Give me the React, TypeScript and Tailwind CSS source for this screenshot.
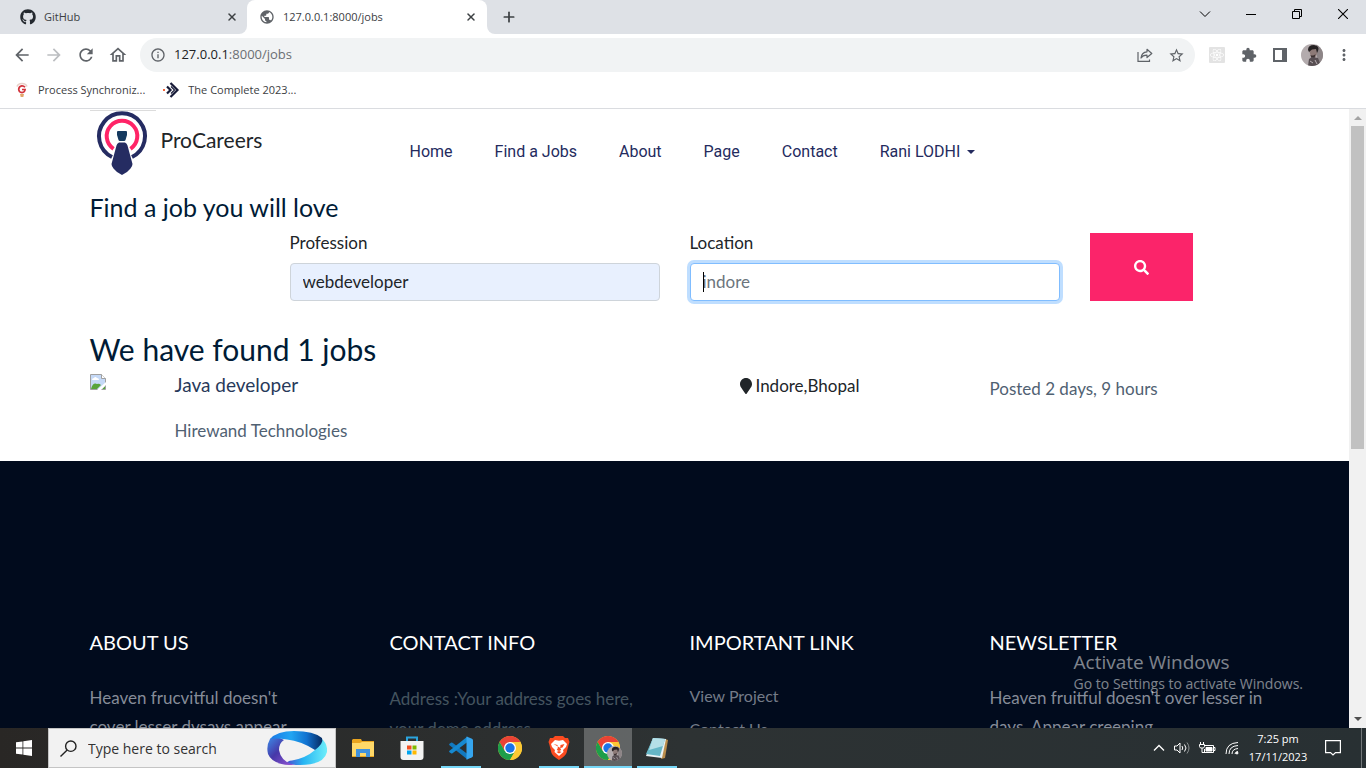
import type { ReactNode } from "react";
import { FaGithub, FaMapMarker, FaReact, FaSearch } from "react-icons/fa";
import {
  MdArrowBack,
  MdArrowForward,
  MdExtension,
  MdInfoOutline,
  MdMoreVert,
  MdOutlineHome,
  MdPublic,
  MdRefresh,
  MdStarBorder,
} from "react-icons/md";
import { Plus, X } from "lucide-react";

function TabTitle({ icon, title }: { icon: ReactNode; title: string }) {
  return (
    <>
      {icon}
      <span className="flex-1 truncate text-[11px] leading-4 text-[#3c4043]">{title}</span>
      <button type="button" aria-label={`Close ${title}`} className="text-[#3c4043]">
        <X size={12} strokeWidth={3} />
      </button>
    </>
  );
}

function TabStrip() {
  return (
    <div className="flex h-[34px] shrink-0 bg-white">
      <div className="flex w-[247px] items-center gap-2 rounded-br-lg bg-[#dee1e6] pr-[9px] pl-5">
        <TabTitle icon={<FaGithub size={16} className="text-[#24292f]" />} title="GitHub" />
      </div>
      <div className="w-[240px] bg-[#dee1e6]">
        <div className="flex h-full items-center gap-2 rounded-t-lg bg-white pr-[10px] pl-3">
          <TabTitle icon={<MdPublic size={16} className="text-[#5f6368]" />} title="127.0.0.1:8000/jobs" />
        </div>
      </div>
      <div className="flex flex-1 items-center rounded-bl-lg bg-[#dee1e6] pl-[14px]">
        <button type="button" aria-label="New tab" className="text-[#3c4043]">
          <Plus size={16} strokeWidth={2.6} />
        </button>
        <div className="ml-auto flex h-full items-start text-black">
          <button type="button" aria-label="Search tabs" className="flex h-7 w-[46px] items-center justify-center">
            <svg width="12" height="12" viewBox="0 0 12 12" fill="none" stroke="currentColor">
              <path d="M1 3.5 6 8.5 11 3.5" />
            </svg>
          </button>
          <button type="button" aria-label="Minimize" className="flex h-7 w-[46px] items-center justify-center">
            <svg width="10" height="10" viewBox="0 0 10 10" fill="currentColor">
              <path d="M0 5h10v1H0z" />
            </svg>
          </button>
          <button type="button" aria-label="Restore" className="flex h-7 w-[46px] items-center justify-center">
            <svg width="10" height="10" viewBox="0 0 10 10" fill="none" stroke="currentColor">
              <path d="M.5 2.5h7v7h-7zM2.5 2.5v-2h7v7h-2" />
            </svg>
          </button>
          <button type="button" aria-label="Close" className="flex h-7 w-[46px] items-center justify-center">
            <svg width="10" height="10" viewBox="0 0 10 10" fill="none" stroke="currentColor" strokeWidth="1.1">
              <path d="M0 0l10 10M10 0 0 10" />
            </svg>
          </button>
        </div>
      </div>
    </div>
  );
}

function Avatar({ size }: { size: number }) {
  return (
    <svg width={size} height={size} viewBox="0 0 22 22">
      <clipPath id={`face-${size}`}>
        <circle cx="11" cy="11" r="11" />
      </clipPath>
      <g clipPath={`url(#face-${size})`}>
        <path d="M0 0h22v22H0z" fill="#b3abad" />
        <path d="M15 0h7v22h-5z" fill="#8d8587" />
        <path d="M8 6q1-4 5-4 5 1 3 8l-2 4-4-1z" fill="#8d7a77" />
        <path d="M7 6q0-5 6-5 6 1 4 6l-1 2-1-4-4 .5L8 8z" fill="#262223" />
        <path d="M9.500 11q3 1.500 5-1l-1 4-3 0z" fill="#3b3030" />
        <path d="M7 22l1-7 3-2 6 1 3 8z" fill="#574e52" />
        <path d="M9 17l3 2M14 16l2 4" stroke="#b8aeb2" />
      </g>
    </svg>
  );
}

function Toolbar() {
  return (
    <div className="flex h-[42px] shrink-0 items-center bg-white pr-[13px] pl-3 text-[#5f6368]">
      <div className="flex gap-3">
        <button type="button" aria-label="Back"><MdArrowBack size={20} /></button>
        <button type="button" aria-label="Forward" className="text-[#bcbec1]"><MdArrowForward size={20} /></button>
        <button type="button" aria-label="Reload"><MdRefresh size={20} /></button>
        <button type="button" aria-label="Home page"><MdOutlineHome size={20} /></button>
      </div>
      <div className="ml-3 flex h-[34px] flex-1 items-center rounded-full bg-[#f1f3f4] px-[10px]">
        <MdInfoOutline size={16} />
        <span className="ml-2 flex-1 text-[13px] text-[#6b6f73]">
          <span className="text-[#202124]">127.0.0.1</span>:8000/jobs
        </span>
        <button type="button" aria-label="Share this page">
          <svg width="16" height="16" viewBox="0 0 16 16" fill="none" stroke="currentColor" strokeWidth="1.2">
            <path d="M1 5v9.4h11.5v-2" />
            <path d="M10 2.3 14.8 6.5 10 10.5V8.2C7 8.1 5.2 9 4 11c.3-3.500 2.500-5.900 6-6.200z" strokeLinejoin="round" />
          </svg>
        </button>
        <button type="button" aria-label="Bookmark this tab" className="ml-[15px]"><MdStarBorder size={17} /></button>
      </div>
      <div className="ml-[14px] flex items-center gap-4">
        <button type="button" aria-label="React extension" className="flex h-4 w-4 items-center justify-center rounded-[1px] bg-[#e3e3e3] text-white">
          <FaReact size={14} />
        </button>
        <button type="button" aria-label="Extensions"><MdExtension size={16} /></button>
        <button type="button" aria-label="Side panel">
          <svg width="14" height="14" viewBox="0 0 14 14" fill="currentColor">
            <path fillRule="evenodd" d="M0 0h14v14H0zM2 2v10h7V2z" />
          </svg>
        </button>
        <button type="button" aria-label="Profile" className="-ml-[2px]"><Avatar size={22} /></button>
        <button type="button" aria-label="Menu" className="-ml-1"><MdMoreVert size={18} /></button>
      </div>
    </div>
  );
}

function Bookmarks() {
  return (
    <div className="flex h-[33px] shrink-0 items-start gap-[18px] border-b border-[#dadce0] bg-white pt-[6px] pl-[14px] text-[11px] leading-4 text-[#3c4043]">
      <a href="#process" className="flex gap-2">
        <svg width="16" height="16" viewBox="0 0 16 16" fill="none">
          <path d="M3 4.500Q4 1.500 8 1.500t5 3" stroke="#e6cfc8" strokeWidth="1.500" />
          <path d="M11 5.300Q9.700 3.700 7.700 3.900 5 4.300 4.700 7.200 4.900 10.400 8 10.600q2.800-.2 3.100-3.100H8" stroke="#d2333b" strokeWidth="1.700" />
          <path d="M6 12h4l-.7 3H6.700z" fill="#e2a66b" />
        </svg>
        <span>Process Synchroniz...</span>
      </a>
      <a href="#complete" className="flex gap-2">
        <svg width="17" height="16" viewBox="0 0 17 16" fill="none">
          <path d="M4 4.500 7.500 8 4 11.500" stroke="#171b38" strokeWidth="2.200" />
          <path d="M7.500 1 14.500 8l-7 7" stroke="#171b38" strokeWidth="2.200" />
          <path d="M8 4.500 11.500 8 8 11.500" stroke="#171b38" strokeWidth="1.200" />
          <path d="M0 7h2v2H0z" fill="#f0643c" />
        </svg>
        <span>The Complete 2023...</span>
      </a>
    </div>
  );
}

function Logo() {
  return (
    <svg width="66" height="67" viewBox="0 0 66 67" fill="none">
      <path d="M0 .5h66" stroke="#dcdcdc" />
      <path d="M22 47A23 23 0 1 1 42 47" stroke="#252c62" strokeWidth="4" />
      <path d="M23.500 38.800A15.300 15.300 0 1 1 40.500 38.800" stroke="#ff2467" strokeWidth="4" />
      <path d="M28 21h8q1 0 1 1v3l-1.500 5q-.2 1-1.500 1h-4q-1.300 0-1.500-1L27 25v-3q0-1 1-1z" fill="#15395f" />
      <path d="M29 32.500h6q2 1 2.500 3L42.500 54q0 2-2 4.500Q37 63 32 65q-5-2-8.500-6.500-2-2.500-2-4.500l5-18.500q.5-2 2.500-3z" fill="#252c62" />
    </svg>
  );
}

const navLinks = ["Home", "Find a Jobs", "About", "Page", "Contact"];

function SiteHeader() {
  return (
    <header className="flex pt-px">
      <a href="#home" className="flex w-[299px] shrink-0 gap-[5px]">
        <Logo />
        <span className="pt-[15px] text-[21px] leading-[30px] text-[#212529]">ProCareers</span>
      </a>
      <nav className="flex items-start pt-[30px] font-['Roboto',sans-serif] text-[16px] leading-6 text-[#242b5e]">
        {navLinks.map((label) => (
          <a key={label} href="#nav" className="px-[21px]">{label}</a>
        ))}
        <button type="button" className="flex items-center gap-[7px] px-[21px]">
          Rani LODHI
          <svg width="8" height="4" viewBox="0 0 8 4" fill="currentColor"><path d="M0 0h8L4 4z" /></svg>
        </button>
      </nav>
    </header>
  );
}

function SearchForm() {
  return (
    <form className="grid grid-cols-12 gap-x-[30px] pt-[9px] text-[17px] text-[#212529]" onSubmit={(e) => e.preventDefault()}>
      <div className="col-span-4 col-start-3">
        <label htmlFor="profession" className="mb-2 block leading-6">Profession</label>
        <input id="profession" defaultValue="webdeveloper" className="h-[38px] w-full rounded border border-[#ced4da] bg-[#e8f0fe] px-3 pb-[2px] outline-none" />
      </div>
      <div className="col-span-4">
        <label htmlFor="location" className="mb-2 block leading-6">Location</label>
        <div className="relative">
          <input id="location" placeholder="indore" className="h-[38px] w-full rounded border border-[#80bdff] bg-white px-3 pb-[2px] ring-3 ring-[#bfdeff] outline-none placeholder:text-[#6c757d]" />
          <span className="absolute top-[9px] left-[13px] h-5 w-px bg-black" />
        </div>
      </div>
      <div className="col-span-2 flex pt-[2px]">
        <button type="submit" aria-label="Search jobs" className="flex w-[103px] items-center justify-center bg-[#fb246a] text-white">
          <FaSearch size={15} />
        </button>
      </div>
    </form>
  );
}

function BrokenImage() {
  return (
    <svg width="16" height="16" viewBox="0 0 16 16" role="img" aria-label="Company logo">
      <path d="M.5.5h11l4 4v11H.5z" fill="#c5d9f7" stroke="#a0a0a0" />
      <path d="M2 6q0-2 2-2 1-2 3 0 2 0 2 2z" fill="#fff" />
      <path d="M1 15q2-7 6-5 2-1 4 1l-4 4z" fill="#58a43b" />
      <path d="M12 15l3-3v3z" fill="#58a43b" />
      <path d="M7 16 16 8v3l-5 5z" fill="#fff" />
      <path d="M11.500.5v4h4" fill="#fff" stroke="#a0a0a0" />
    </svg>
  );
}

function JobResults() {
  return (
    <section className="pt-[31px] pb-[18px]">
      <h1 className="text-[30px] leading-[34px] text-[#001b36]">We have found 1 jobs</h1>
      <article className="mt-2 grid grid-cols-[85px_1fr_250px_270px] text-[17px] leading-6 text-[#506172]">
        <BrokenImage />
        <div>
          <h2 className="text-[19px] leading-[21px] text-[#28395a]">Java developer</h2>
          <p className="mt-6">Hirewand Technologies</p>
        </div>
        <p className="flex items-start gap-1 text-[#212529]">
          <FaMapMarker size={16} className="mt-1 -mr-[2px] -ml-[2px]" />
          Indore,Bhopal
        </p>
        <p className="pt-[3px]">Posted 2 days, 9 hours</p>
      </article>
    </section>
  );
}

function FooterColumn({ title, children }: { title: string; children: ReactNode }) {
  return (
    <div>
      <h3 className="mb-[29px] text-[20px] leading-6 text-white">{title}</h3>
      {children}
    </div>
  );
}

function SiteFooter() {
  return (
    <footer className="flex-1 bg-[#010b1d] pt-[169px] text-[17px] text-[#868c98]">
      <div className="mx-auto grid max-w-[1200px] grid-cols-4 gap-[30px] px-[15px] whitespace-nowrap">
        <FooterColumn title="ABOUT US">
          <p className="leading-[29px]">Heaven frucvitful doesn't<br />cover lesser dvsays appear</p>
        </FooterColumn>
        <FooterColumn title="CONTACT INFO">
          <p className="pt-px leading-[30px] text-[#44545f]">Address :Your address goes here,<br />your demo address.</p>
        </FooterColumn>
        <FooterColumn title="IMPORTANT LINK">
          <ul className="-mt-1 text-[16px] leading-[33px] text-[#747b88]">
            <li><a href="#view">View Project</a></li>
            <li><a href="#contact">Contact Us</a></li>
          </ul>
        </FooterColumn>
        <FooterColumn title="NEWSLETTER">
          <p className="leading-[29px]">Heaven fruitful doesn't over lesser in<br />days. Appear creeping</p>
        </FooterColumn>
      </div>
    </footer>
  );
}

function Scrollbar() {
  return (
    <div aria-hidden="true" className="flex w-[17px] shrink-0 flex-col items-center bg-[#f1f1f1] py-[6px]">
      <svg width="8" height="5" viewBox="0 0 8 5" fill="#a3a3a3"><path d="M0 5h8L4 1z" /></svg>
      <div className="mt-[6px] h-[323px] w-[13px] shrink-0 bg-[#c1c1c1]" />
      <svg width="8" height="5" viewBox="0 0 8 5" fill="#505050" className="mt-auto"><path d="M0 0h8L4 4z" /></svg>
    </div>
  );
}

function TaskButton({ label, open, active, children }: { label: string; open?: boolean; active?: boolean; children: ReactNode }) {
  return (
    <button
      type="button"
      aria-label={label}
      className={`flex w-12 flex-col items-center ${active ? "bg-white/25" : ""}`}
    >
      <span className="flex flex-1 items-center pt-[2px]">{children}</span>
      <span className={`h-[2px] ${active ? "w-12" : "w-10"} ${open ? "bg-[#76d7f7]" : ""}`} />
    </button>
  );
}

function ChromeMark() {
  return (
    <svg width="24" height="24" viewBox="0 0 24 24">
      <circle cx="12" cy="12" r="12" fill="#fcc934" />
      <path d="M1.600 6A12 12 0 0 1 22.400 6H12L6.800 15z" fill="#ea4335" />
      <path d="M1.600 6A12 12 0 0 0 12 24l5.200-9-10.400 0z" fill="#1e9e4a" />
      <path d="M12 6h10.400A12 12 0 0 1 12 24l5.200-9z" fill="#fcc934" />
      <circle cx="12" cy="12" r="6" fill="#fff" />
      <circle cx="12" cy="12" r="4.700" fill="#1a73e8" />
    </svg>
  );
}

function SearchArt() {
  return (
    <svg width="60" height="34" viewBox="0 0 60 34">
      <defs>
        <linearGradient id="ribbonTop" x1="0" x2="1">
          <stop offset="0" stopColor="#1b78e6" />
          <stop offset=".4" stopColor="#22a5f2" />
          <stop offset=".7" stopColor="#1272d0" />
          <stop offset="1" stopColor="#062a60" />
        </linearGradient>
        <linearGradient id="ribbonLeft" x1="0" x2="1" y2="1">
          <stop offset="0" stopColor="#3d8ce8" />
          <stop offset=".45" stopColor="#4638a8" />
          <stop offset="1" stopColor="#9a58d8" />
        </linearGradient>
        <linearGradient id="ribbonRight" x1="0" x2="1">
          <stop offset="0" stopColor="#4a4fd0" />
          <stop offset=".4" stopColor="#26b4f2" />
          <stop offset="1" stopColor="#6eeefa" />
        </linearGradient>
      </defs>
      <path d="M54 7Q61 13 60 21 57 34 33 34q-9 0-13-2 0-2 5-2.500Q39 27 48 19z" fill="url(#ribbonRight)" />
      <path d="M3 8Q-1 15 1 23q4 10 21 11h6q-14-3-16-15 0-7 5-10Q9 4 3 8z" fill="url(#ribbonLeft)" />
      <path d="M3 8Q10 0 27 0q20 0 28 7 2 5-7 12Q34 10 20 8.500 10 7 3 8z" fill="url(#ribbonTop)" />
    </svg>
  );
}

function Taskbar() {
  return (
    <div className="flex h-10 shrink-0 bg-linear-to-r from-[#292725] via-[#2d3233] to-[#283033] font-['Open_Sans',sans-serif]">
      <button type="button" aria-label="Start" className="flex w-12 items-center justify-center">
        <svg width="16" height="16" viewBox="0 0 16 16" fill="#fff">
          <path d="M0 2.300 6.500 1.400v6.200H0zM7.300 1.300 16 0v7.600H7.300zM0 8.400h6.500v6.200L0 13.700zM7.300 8.400H16V16l-8.700-1.300z" />
        </svg>
      </button>
      <label className="flex w-[288px] items-center border border-[#c4c4c4] bg-[#f2f2f2] pr-2 pl-[11px]">
        <svg width="17" height="17" viewBox="0 0 17 17" fill="none" stroke="#222" strokeWidth="1.400">
          <circle cx="10.800" cy="6.200" r="5.200" />
          <path d="M7.200 10 .5 16.500" />
        </svg>
        <input aria-label="Type here to search" placeholder="Type here to search" className="ml-[11px] w-0 flex-1 text-[14px] outline-none placeholder:text-[#333]" />
        <SearchArt />
      </label>
      <div className="flex gap-px pl-[3px]">
        <TaskButton label="File Explorer">
          <svg width="22" height="20" viewBox="0 0 22 20">
            <path d="M0 2 1 1h8l1 2h12v16H0z" fill="#e9a41f" />
            <path d="M0 5h8l2-1h12v14H0z" fill="#ffd868" />
            <path d="M4 19v-8h14v8h-4v-4H8v4z" fill="#4192dc" />
          </svg>
        </TaskButton>
        <TaskButton label="Microsoft Store">
          <svg width="24" height="24" viewBox="0 0 24 24">
            <path d="M7 6V1.500h10V6" fill="none" stroke="#2ba4dd" strokeWidth="2" />
            <path d="M.5 5h23v16q0 3-3 3h-17q-3 0-3-3z" fill="#f3f3f3" />
            <path d="M7 9.500h4.500v4H7z" fill="#f25022" /><path d="M12.500 9.500h4v4h-4z" fill="#7fba00" />
            <path d="M7 14.500h4.500v4H7z" fill="#00a4ef" /><path d="M12.500 14.500h4v4h-4z" fill="#ffb900" />
          </svg>
        </TaskButton>
        <TaskButton label="Visual Studio Code" open>
          <svg width="24" height="24" viewBox="0 0 24 24">
            <path d="M.5 7.800 2 6.700q.8-.4 1.500.1L18.500 18v5.500L.5 9.200q-.8-.7 0-1.400z" fill="#1279bf" />
            <path d="M.5 16.200 2 17.300q.8.4 1.500-.1L18.500 6V.5L.5 14.800q-.8.7 0 1.400z" fill="#1689d0" />
            <path d="M17.500.5 23 2.700q1 .5 1 1.500v15.600q0 1-1 1.500l-5.500 2.500z" fill="#35a5ee" />
          </svg>
        </TaskButton>
        <TaskButton label="Chrome"><ChromeMark /></TaskButton>
        <TaskButton label="Brave" open>
          <svg width="22" height="24" viewBox="0 0 22 24">
            <path d="M5 2 7 0h8l2 2 3 0 1.500 4-.7 2-2.300 9q-1 3-7.500 7-6.500-4-7.500-7L1.200 8 .5 6 2 2z" fill="#fb4b20" />
            <path d="M7 4l4 .7L15 4l4 4-1 3-3 3 .5 2-4.500 4-4.500-4L7 14l-3-3-1-3z" fill="#fff" />
            <path d="M5.500 8l4 1 .3 3-1 2 2.200 1 2.200-1-1-2 .3-3 4-1-2 3.500-2 .5M7.500 11.500l2 .5M8.500 16 11 17.500 13.500 16 11 15z" fill="#fb4b20" />
          </svg>
        </TaskButton>
        <TaskButton label="Chrome profile" open active>
          <span className="relative block">
            <ChromeMark />
            <span className="absolute top-[10px] left-[11px]"><Avatar size={15} /></span>
          </span>
        </TaskButton>
        <TaskButton label="Notepad" open>
          <svg width="24" height="24" viewBox="0 0 24 24">
            <path d="M20 3 23 4 20 22l-4 1z" fill="#b98d4c" />
            <path d="M8 2 21 3 17 22 1 20z" fill="#e9f3f5" />
            <path d="M8 2 20 3 15 20 1 18z" fill="#65b6c6" />
            <path d="M8 2 20 3 18 10 4 14z" fill="#b5dfe7" />
          </svg>
        </TaskButton>
      </div>
      <div className="ml-auto flex items-center text-white">
        <svg width="12" height="8" viewBox="0 0 12 8" fill="none" stroke="currentColor" strokeWidth="1.300"><path d="M1 6.500 6 1.500l5 5" /></svg>
        <svg width="17" height="14" viewBox="0 0 17 14" fill="none" stroke="currentColor" className="ml-[9px]">
          <path d="M.5 5v4H3l3 3V2L3 5zM8 5q1.500 2 0 4M10.500 3.500q3 3.500 0 7" />
          <path d="M13 1.500q4 5.500 0 11" stroke="#8d9293" />
        </svg>
        <svg width="17" height="14" viewBox="0 0 17 14" fill="none" stroke="currentColor" className="ml-2">
          <path d="M5 4.500h9.500v7h-9V8M14.500 6.500h1.500v3h-1.500" />
          <path d="M7 6.500h6v3.500H7z" fill="currentColor" />
          <path d="M1.500 1v2M4.500 1v2M.5 3.500h5v2l-1 1.500h-3l-1-1.500zM3 7v4.500h3" />
        </svg>
        <svg width="15" height="14" viewBox="0 0 15 14" fill="none" stroke="currentColor" className="ml-[9px]">
          <path d="M1 13Q1 2 13 1.500M4 13Q4 5 13 4.500M7 13q0-5 6-5.500M10 13q0-2 3-2.500" />
          <circle cx="12" cy="12" r="1" fill="currentColor" />
        </svg>
        <div className="w-[76px] text-center text-[11px] leading-[18px]">
          <div>7:25 pm</div>
          <div>17/11/2023</div>
        </div>
        <svg width="16" height="16" viewBox="0 0 16 16" fill="none" stroke="currentColor" strokeWidth="1.200" className="ml-[9px]">
          <path d="M.6.6h14.800v12H10.500L8 15l-2.500-2.400H.6z" />
        </svg>
        <div className="mr-1 ml-5 h-10 w-px bg-[#727779]" />
      </div>
    </div>
  );
}

export default function App() {
  return (
    <div className="flex h-screen flex-col overflow-hidden bg-white font-['Open_Sans',sans-serif]">
      <TabStrip />
      <Toolbar />
      <Bookmarks />
      <div className="relative flex min-h-0 flex-1">
        <main className="flex min-w-0 flex-1 flex-col overflow-hidden font-['Lato',sans-serif]">
          <div className="mx-auto w-full max-w-[1200px] px-[15px]">
            <SiteHeader />
            <h2 className="mt-4 text-[25px] leading-[29px] text-[#001b36]">Find a job you will love</h2>
            <SearchForm />
            <JobResults />
          </div>
          <SiteFooter />
        </main>
        <Scrollbar />
        <div className="absolute right-[63px] bottom-[34px] text-white/50">
          <p className="text-[19px] leading-6">Activate Windows</p>
          <p className="text-[14px] leading-5">Go to Settings to activate Windows.</p>
        </div>
      </div>
      <Taskbar />
    </div>
  );
}
